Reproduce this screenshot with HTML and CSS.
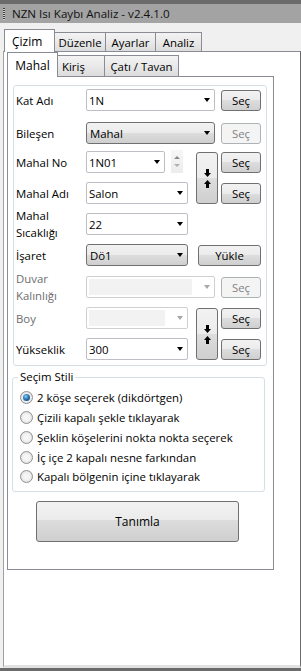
FILE: index.html
```html
<!DOCTYPE html>
<html lang="tr">
<head>
    <meta charset="UTF-8">
    <title>NZN Isı Kaybı Analiz</title>
    <link rel="stylesheet" href="styles.css">
</head>
<body>
    <div class="window">
        <div class="titlebar">
            <span class="grip"></span>
            <span class="title">NZN Isı Kaybı Analiz - v2.4.1.0</span>
        </div>

        <div class="client">
            <div class="tabstrip outer-strip">
                <div class="tab active t-cizim">Çizim</div>
                <div class="tab t-duzenle">Düzenle</div>
                <div class="tab t-ayarlar">Ayarlar</div>
                <div class="tab t-analiz">Analiz</div>
            </div>

            <div class="outer-page">
                <div class="tabstrip inner-strip">
                    <div class="tab active t-mahal">Mahal</div>
                    <div class="tab t-kiris">Kiriş</div>
                    <div class="tab t-cati">Çatı / Tavan</div>
                </div>

                <div class="inner-page">
                    <!-- Mahal bilgileri -->
                    <div class="group form">
                        <div class="lbl r1">Kat Adı</div>
                        <div class="combo wide c-wide r1"><span>1N</span><i class="caret"></i></div>
                        <button class="btn sec c-sec r1">Seç</button>

                        <div class="lbl r2">Bileşen</div>
                        <div class="combo list wide c-wide r2"><span>Mahal</span><i class="caret"></i></div>
                        <button class="btn sec disabled c-sec r2">Seç</button>

                        <div class="lbl r3">Mahal No</div>
                        <div class="numrow c-wide r3">
                            <div class="combo short"><span>1N01</span><i class="caret"></i></div>
                            <div class="spin"><i class="up"></i><i class="down"></i></div>
                        </div>
                        <button class="btn arrows c-arrows r3-4">
                            <svg width="7" height="8" viewBox="0 0 7 8"><path d="M2 0h3v4h2L3.5 8 0 4h2z"/></svg>
                            <svg width="7" height="8" viewBox="0 0 7 8"><path d="M2 8h3V4h2L3.5 0 0 4h2z"/></svg>
                        </button>
                        <button class="btn sec c-sec r3">Seç</button>

                        <div class="lbl r4">Mahal Adı</div>
                        <div class="combo c-combo r4"><span>Salon</span><i class="caret"></i></div>
                        <button class="btn sec c-sec r4">Seç</button>

                        <div class="lbl two r5">Mahal<br>Sıcaklığı</div>
                        <div class="combo c-combo r5"><span>22</span><i class="caret"></i></div>

                        <div class="lbl r6">İşaret</div>
                        <div class="combo list c-combo r6"><span>Dö1</span><i class="caret"></i></div>
                        <button class="btn load c-load r6">Yükle</button>

                        <div class="lbl two off r7">Duvar<br>Kalınlığı</div>
                        <div class="combo wide disabled c-wide r7"><span class="fill"></span><i class="caret"></i></div>
                        <button class="btn sec disabled c-sec r7">Seç</button>

                        <div class="lbl off r8">Boy</div>
                        <div class="combo disabled c-combo r8"><span class="fill"></span><i class="caret"></i></div>
                        <button class="btn arrows c-arrows r8-9">
                            <svg width="7" height="8" viewBox="0 0 7 8"><path d="M2 0h3v4h2L3.5 8 0 4h2z"/></svg>
                            <svg width="7" height="8" viewBox="0 0 7 8"><path d="M2 8h3V4h2L3.5 0 0 4h2z"/></svg>
                        </button>
                        <button class="btn sec c-sec r8">Seç</button>

                        <div class="lbl r9">Yükseklik</div>
                        <div class="combo c-combo r9"><span>300</span><i class="caret"></i></div>
                        <button class="btn sec c-sec r9">Seç</button>
                    </div>

                    <fieldset class="group style-group">
                        <legend>Seçim Stili</legend>
                        <div class="opt"><span class="radio checked"></span>2 köşe seçerek (dikdörtgen)</div>
                        <div class="opt"><span class="radio"></span>Çizili kapalı şekle tıklayarak</div>
                        <div class="opt"><span class="radio"></span>Şeklin köşelerini nokta nokta seçerek</div>
                        <div class="opt"><span class="radio"></span>İç içe 2 kapalı nesne farkından</div>
                        <div class="opt"><span class="radio"></span>Kapalı bölgenin içine tıklayarak</div>
                    </fieldset>

                    <button class="btn big">Tanımla</button>
                </div>
            </div>
        </div>
    </div>
</body>
</html>
```

FILE: styles.css
```css
body {
    margin: 0;
    background-color: #6b6b6b;
    font-family: "Open Sans", "Noto Sans", sans-serif;
    font-size: 11.4px;
    color: #000;
}

/* Window frame */
.window {
    width: 301px;
    height: 671px;
    box-sizing: border-box;
    border-top: 4px solid #6b6b6b;
    border-bottom: 3px solid #6b6b6b;
    background-color: #f0f0f0;
    display: flex;
    flex-direction: column;
}

.titlebar {
    height: 19px;
    flex: none;
    background-color: #a3a3a3;
    display: flex;
    align-items: center;
    padding-left: 3px;
    color: #111;
    font-size: 11.6px;
}

.grip {
    width: 2px;
    height: 12px;
    margin-right: 7px;
    background: repeating-linear-gradient(#3c3c3c 0 1px, #d0d0d0 1px 2px);
}

.client {
    flex: 1;
    display: flex;
    flex-direction: column;
}

/* Tabs */
.tabstrip {
    display: flex;
    align-items: flex-end;
    flex: none;
}

.outer-strip {
    height: 28px;
    padding-left: 4px;
}

.inner-strip {
    height: 24px;
    padding-left: 3px;
}

.tab {
    box-sizing: border-box;
    border: 1px solid #898c95;
    border-bottom: none;
    background: linear-gradient(#f3f3f3, #e9e9e9 50%, #dcdcdc);
    display: flex;
    align-items: center;
    justify-content: center;
    padding-top: 1px;
}

.tab + .tab {
    margin-left: -1px;
}

.tab.active {
    background: #fff;
    position: relative;
    z-index: 1;
    margin-bottom: -1px;
    padding-top: 0;
    font-size: 12px;
}

.outer-strip .tab { height: 19px; }
.outer-strip .tab.active { height: 23px; }
.inner-strip .tab { height: 21px; }
.inner-strip .tab.active { height: 25px; }

.t-cizim { width: 51px; justify-content: flex-start; padding-left: 7px; }
.t-duzenle { width: 52px; }
.t-ayarlar { width: 51px; }
.t-analiz { width: 47px; }
.t-mahal { width: 51px; }
.t-kiris { width: 48px; justify-content: flex-start; padding-left: 4px; }
.t-cati { width: 75px; }

/* Pages */
.outer-page {
    flex: 1;
    margin-left: 3px;
    background-color: #fff;
    border: 1px solid #898c95;
    border-left-color: #a0a0a0;
    border-right-color: #6b6b6b;
    border-bottom: 3px solid #e2e2e2;
    display: flex;
    flex-direction: column;
}

.inner-page {
    width: 267px;
    height: 494px;
    box-sizing: border-box;
    margin-left: 3px;
    border: 1px solid #898c95;
    background-color: #fff;
    display: flex;
    flex-direction: column;
    align-items: flex-start;
}

.group {
    border: 1px solid #d5dfe5;
    border-radius: 3px;
    box-sizing: border-box;
}

/* Form grid */
.form {
    width: 254px;
    height: 281px;
    margin: 8px 0 0 5px;
    padding: 3px 0 0 2px;
    display: grid;
    grid-template-columns: 70px 102px 8px 22px 3px 40px;
    grid-template-rows: 33px 29px 31px 31px 31px 32px 31px 31px 22px;
}

.form > * {
    align-self: start;
}

.r1 { grid-row: 1; }
.r2 { grid-row: 2; }
.r3 { grid-row: 3; }
.r4 { grid-row: 4; }
.r5 { grid-row: 5; }
.r6 { grid-row: 6; }
.r7 { grid-row: 7; }
.r8 { grid-row: 8; }
.r9 { grid-row: 9; }
.r3-4 { grid-row: 3 / span 2; }
.r8-9 { grid-row: 8 / span 2; }

.c-combo { grid-column: 2; }
.c-wide { grid-column: 2 / 5; }
.c-arrows { grid-column: 4; }
.c-sec { grid-column: 6; }
.c-load { grid-column: 3 / 7; justify-self: end; }

.lbl {
    grid-column: 1;
    height: 22px;
    display: flex;
    align-items: center;
    white-space: nowrap;
}

.lbl.two {
    line-height: 17px;
}

.lbl.off {
    color: #6d6d6d;
}

/* Combo boxes */
.combo {
    box-sizing: border-box;
    height: 22px;
    border: 1px solid #bcbfc5;
    border-radius: 2px;
    background-color: #fff;
    display: flex;
    align-items: center;
    justify-content: space-between;
    padding: 0 4px 0 2px;
}

.combo.wide { width: 129px; }
.combo.short { width: 79px; }

.combo.list {
    border-color: #707070;
    border-radius: 3px;
    background: linear-gradient(#f2f2f2, #ebebeb 50%, #dddddd 50%, #cfcfcf);
    padding-left: 3px;
}

.combo.disabled {
    border-color: #d0d0d0;
    padding: 2px 4px 2px 2px;
}

.combo .fill {
    align-self: stretch;
    flex: 1;
    margin-right: 12px;
    background-color: #f2f2f2;
}

.caret {
    width: 0;
    height: 0;
    border-top: 4px solid #000;
    border-left: 3.5px solid transparent;
    border-right: 3.5px solid transparent;
}

.combo.disabled .caret {
    border-top-color: #a8a8a8;
}

.numrow {
    display: flex;
    align-items: flex-start;
}

.spin {
    width: 12px;
    height: 23px;
    margin: -1px 0 0 6px;
    background: linear-gradient(#f7f7f7, #ececec);
    display: flex;
    flex-direction: column;
    align-items: center;
    justify-content: space-around;
    padding: 3px 0;
    box-sizing: border-box;
}

.spin i {
    width: 0;
    height: 0;
    border-left: 3px solid transparent;
    border-right: 3px solid transparent;
}

.spin .up { border-bottom: 3px solid #8a8a8a; }
.spin .down { border-top: 3px solid #b0b0b0; }

/* Buttons */
.btn {
    box-sizing: border-box;
    font: inherit;
    color: #000;
    padding: 0;
    border: 1px solid #707070;
    border-radius: 3px;
    background: linear-gradient(#f2f2f2, #ebebeb 50%, #dddddd 50%, #cfcfcf);
}

.btn.sec {
    width: 40px;
    height: 21px;
    margin-top: 1px;
}

.btn.disabled {
    border-color: #adb2b5;
    background: #f4f4f4;
    color: #838383;
}

.btn.load {
    width: 63px;
    height: 21px;
    margin-top: 1px;
}

.btn.arrows {
    width: 22px;
    height: 52px;
    margin-top: 1px;
    display: flex;
    flex-direction: column;
    align-items: center;
    justify-content: center;
    gap: 3px;
}

.btn.arrows svg {
    display: block;
}

.btn.big {
    width: 203px;
    height: 41px;
    margin: 9px 0 0 28px;
    font-size: 12px;
    background: linear-gradient(#f2f2f2, #ebebeb 45%, #dddddd 45%, #cfcfcf);
}

/* Selection style */
.style-group {
    width: 253px;
    margin: 3px 0 0 4px;
    padding: 3px 0 4px 5px;
}

.style-group legend {
    padding: 0 2px;
    line-height: 16px;
}

.opt {
    height: 19.75px;
    display: flex;
    align-items: center;
    white-space: nowrap;
}

.radio {
    width: 13px;
    height: 13px;
    box-sizing: border-box;
    border-radius: 50%;
    border: 1px solid #8e8f8f;
    background: radial-gradient(circle, #f6f6f6 0 35%, #d6d6d6 100%);
    margin: 0 4px 0 2px;
    position: relative;
    flex: none;
}

.radio.checked::after {
    content: "";
    position: absolute;
    inset: 2px;
    border-radius: 50%;
    background: radial-gradient(circle at 40% 35%, #8cd0f5, #2a76b8 45%, #0d3a66);
}
```
